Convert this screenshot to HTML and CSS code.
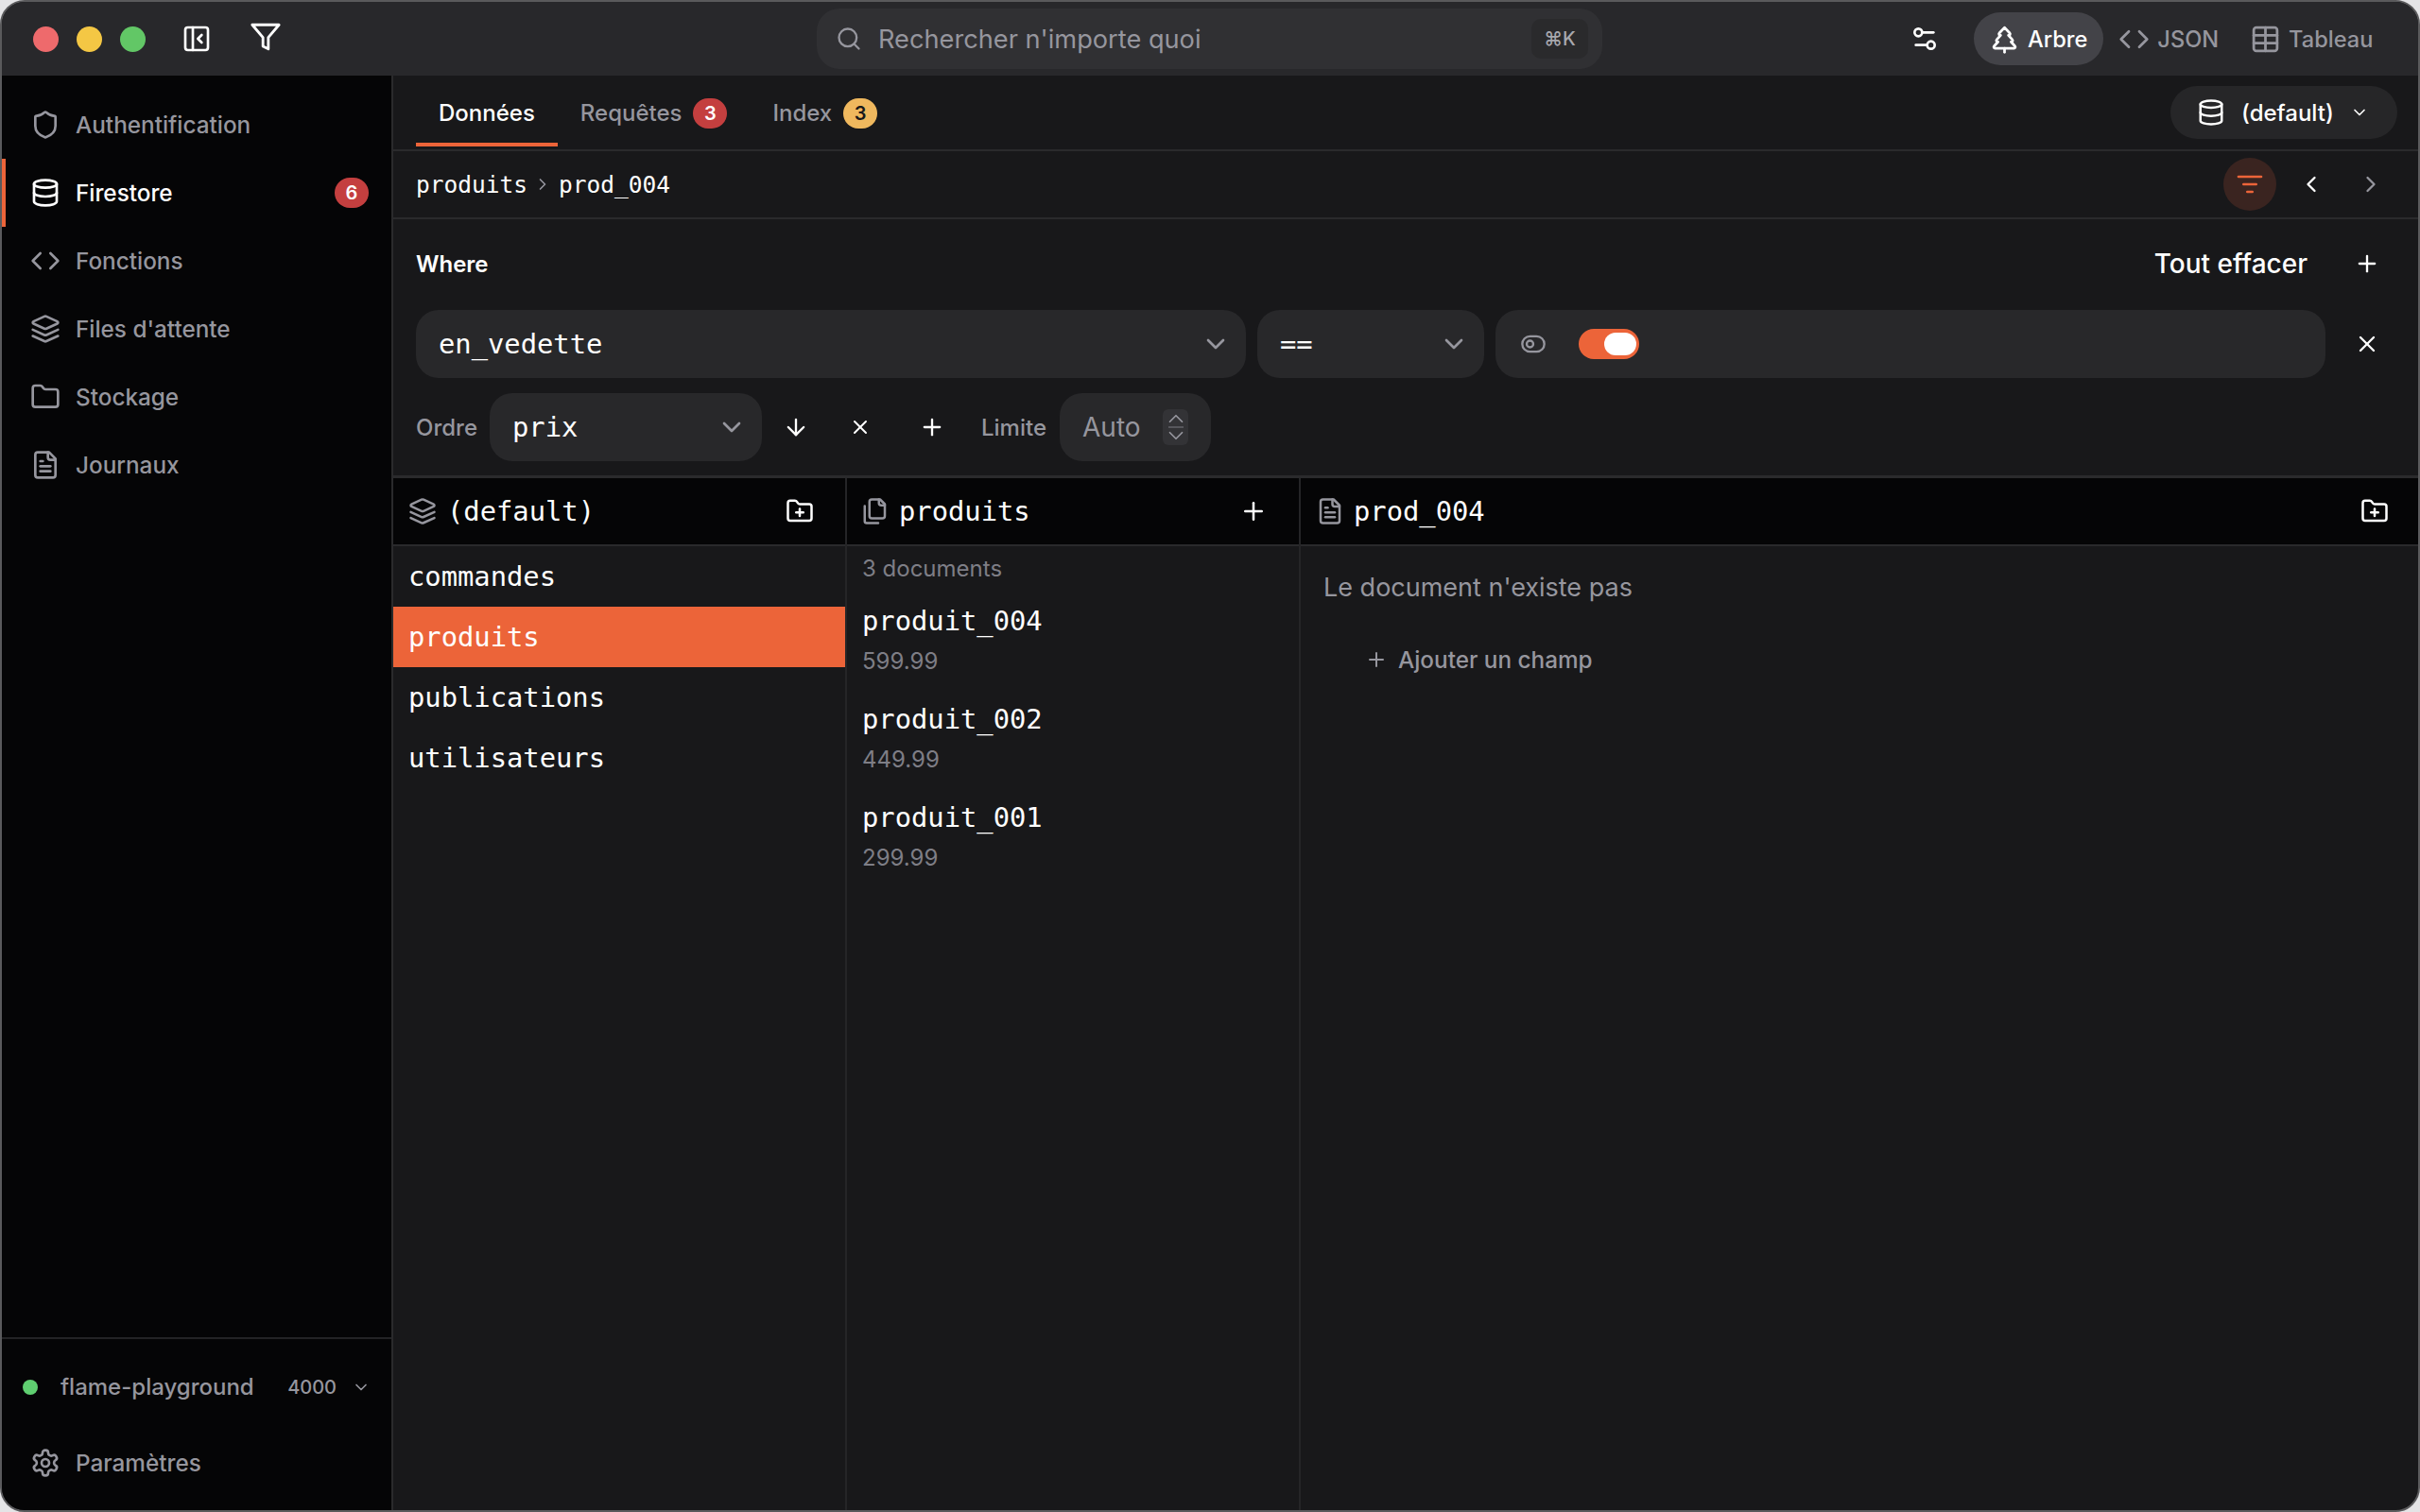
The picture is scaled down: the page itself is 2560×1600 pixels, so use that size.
FILE: index.html
```html
<!DOCTYPE html>
<html>

<head>
  <meta http-equiv="Content-Type" content="text/html; charset=utf-8" />
  <title>flame-playground</title>
  <link rel="stylesheet" href="styles.css">
</head>

<body>
  <svg class="sprites" xmlns="http://www.w3.org/2000/svg">
    <symbol id="i-shield" viewBox="0 0 24 24"><path d="M20 13c0 5-3.5 7.5-7.66 8.95a1 1 0 0 1-.67-.01C7.5 20.5 4 18 4 13V6a1 1 0 0 1 1-1c2 0 4.5-1.2 6.24-2.72a1.17 1.17 0 0 1 1.52 0C14.51 3.81 17 5 19 5a1 1 0 0 1 1 1z" /></symbol>
    <symbol id="i-db" viewBox="0 0 24 24"><ellipse cx="12" cy="5" rx="9" ry="3" /><path d="M3 5V19A9 3 0 0 0 21 19V5" /><path d="M3 12A9 3 0 0 0 21 12" /></symbol>
    <symbol id="i-code" viewBox="0 0 24 24"><path d="m16 18 6-6-6-6" /><path d="m8 6-6 6 6 6" /></symbol>
    <symbol id="i-layers" viewBox="0 0 24 24"><path d="m12.83 2.18a2 2 0 0 0-1.66 0L2.6 6.08a1 1 0 0 0 0 1.83l8.58 3.91a2 2 0 0 0 1.66 0l8.58-3.9a1 1 0 0 0 0-1.83Z" /><path d="m22 17.65-9.17 4.16a2 2 0 0 1-1.66 0L2 17.65" /><path d="m22 12.65-9.17 4.16a2 2 0 0 1-1.66 0L2 12.65" /></symbol>
    <symbol id="i-folder" viewBox="0 0 24 24"><path d="M20 20a2 2 0 0 0 2-2V8a2 2 0 0 0-2-2h-7.9a2 2 0 0 1-1.69-.9L9.6 3.9A2 2 0 0 0 7.93 3H4a2 2 0 0 0-2 2v13a2 2 0 0 0 2 2Z" /></symbol>
    <symbol id="i-folder-plus" viewBox="0 0 24 24"><path d="M20 20a2 2 0 0 0 2-2V8a2 2 0 0 0-2-2h-7.9a2 2 0 0 1-1.69-.9L9.6 3.9A2 2 0 0 0 7.93 3H4a2 2 0 0 0-2 2v13a2 2 0 0 0 2 2Z" /><path d="M12 10v6" /><path d="M9 13h6" /></symbol>
    <symbol id="i-file" viewBox="0 0 24 24"><path d="M15 2H6a2 2 0 0 0-2 2v16a2 2 0 0 0 2 2h12a2 2 0 0 0 2-2V7Z" /><path d="M14 2v4a2 2 0 0 0 2 2h4" /><path d="M10 9H8" /><path d="M16 13H8" /><path d="M16 17H8" /></symbol>
    <symbol id="i-files" viewBox="0 0 24 24"><path d="M20 7h-3a2 2 0 0 1-2-2V2" /><path d="M9 18a2 2 0 0 1-2-2V4a2 2 0 0 1 2-2h7l4 4v10a2 2 0 0 1-2 2Z" /><path d="M3 7.6v12.8A1.6 1.6 0 0 0 4.6 22h9.8" /></symbol>
    <symbol id="i-cog" viewBox="0 0 24 24"><path d="M12.22 2h-.44a2 2 0 0 0-2 2v.18a2 2 0 0 1-1 1.73l-.43.25a2 2 0 0 1-2 0l-.15-.08a2 2 0 0 0-2.73.73l-.22.38a2 2 0 0 0 .73 2.73l.15.1a2 2 0 0 1 1 1.72v.51a2 2 0 0 1-1 1.74l-.15.09a2 2 0 0 0-.73 2.73l.22.38a2 2 0 0 0 2.73.73l.15-.08a2 2 0 0 1 2 0l.43.25a2 2 0 0 1 1 1.73V20a2 2 0 0 0 2 2h.44a2 2 0 0 0 2-2v-.18a2 2 0 0 1 1-1.73l.43-.25a2 2 0 0 1 2 0l.15.08a2 2 0 0 0 2.73-.73l.22-.39a2 2 0 0 0-.73-2.73l-.15-.08a2 2 0 0 1-1-1.74v-.5a2 2 0 0 1 1-1.74l.15-.09a2 2 0 0 0 .73-2.73l-.22-.38a2 2 0 0 0-2.73-.73l-.15.08a2 2 0 0 1-2 0l-.43-.25a2 2 0 0 1-1-1.73V4a2 2 0 0 0-2-2z" /><circle cx="12" cy="12" r="3" /></symbol>
    <symbol id="i-panel" viewBox="0 0 24 24"><rect x="3" y="3" width="18" height="18" rx="2" /><path d="M9 3v18" /><path d="m16 15-3-3 3-3" /></symbol>
    <symbol id="i-funnel" viewBox="0 0 24 24"><path d="M22 3H2l8 9.46V19l4 2v-8.54z" /></symbol>
    <symbol id="i-search" viewBox="0 0 24 24"><circle cx="11" cy="11" r="8" /><path d="m21 21-4.3-4.3" /></symbol>
    <symbol id="i-sliders" viewBox="0 0 24 24"><path d="M14 17H5" /><path d="M19 7h-9" /><circle cx="17" cy="17" r="3" /><circle cx="7" cy="7" r="3" /></symbol>
    <symbol id="i-tree" viewBox="0 0 24 24"><path d="m17 14 3 3.3a1 1 0 0 1-.7 1.7H4.7a1 1 0 0 1-.7-1.7L7 14h-.3a1 1 0 0 1-.7-1.7L9 9h-.2A1 1 0 0 1 8 7.3L12 3l4 4.3a1 1 0 0 1-.8 1.7H15l3 3.3a1 1 0 0 1-.7 1.7H17Z" /><path d="M12 22v-3" /></symbol>
    <symbol id="i-table" viewBox="0 0 24 24"><rect x="3" y="3" width="18" height="18" rx="2" /><path d="M12 3v18" /><path d="M3 9h18" /><path d="M3 15h18" /></symbol>
    <symbol id="i-down" viewBox="0 0 24 24"><path d="m6 9 6 6 6-6" /></symbol>
    <symbol id="i-left" viewBox="0 0 24 24"><path d="m15 18-6-6 6-6" /></symbol>
    <symbol id="i-right" viewBox="0 0 24 24"><path d="m9 18 6-6-6-6" /></symbol>
    <symbol id="i-plus" viewBox="0 0 24 24"><path d="M5 12h14" /><path d="M12 5v14" /></symbol>
    <symbol id="i-x" viewBox="0 0 24 24"><path d="M18 6 6 18" /><path d="m6 6 12 12" /></symbol>
    <symbol id="i-arrow" viewBox="0 0 24 24"><path d="M12 5v14" /><path d="m19 12-7 7-7-7" /></symbol>
    <symbol id="i-lines" viewBox="0 0 24 24"><path d="M3 6h18" /><path d="M7 12h10" /><path d="M10 18h4" /></symbol>
    <symbol id="i-toggle" viewBox="0 0 24 24"><circle cx="9" cy="12" r="3" /><rect x="2" y="5" width="20" height="14" rx="7" /></symbol>
  </svg>

  <div class="window">
    <header class="titlebar">
      <div class="titlebar-left">
        <span class="light light-red"></span>
        <span class="light light-yellow"></span>
        <span class="light light-green"></span>
        <svg class="icon icon-bar panel-btn"><use href="#i-panel" /></svg>
        <svg class="icon icon-bar funnel-btn"><use href="#i-funnel" /></svg>
      </div>
      <div class="search">
        <svg class="icon search-icon"><use href="#i-search" /></svg>
        <span class="search-text">Rechercher n'importe quoi</span>
        <span class="kbd">⌘K</span>
      </div>
      <div class="titlebar-right">
        <svg class="icon sliders-btn"><use href="#i-sliders" /></svg>
        <div class="view view-active">
          <svg class="icon view-icon"><use href="#i-tree" /></svg>
          <span>Arbre</span>
        </div>
        <div class="view">
          <svg class="icon view-icon"><use href="#i-code" /></svg>
          <span>JSON</span>
        </div>
        <div class="view">
          <svg class="icon view-icon"><use href="#i-table" /></svg>
          <span>Tableau</span>
        </div>
      </div>
    </header>

    <div class="app">
      <aside class="sidebar">
        <nav class="nav">
          <a class="nav-item"><svg class="icon"><use href="#i-shield" /></svg>Authentification</a>
          <a class="nav-item active"><svg class="icon"><use href="#i-db" /></svg>Firestore<span class="badge badge-red nav-badge">6</span></a>
          <a class="nav-item"><svg class="icon"><use href="#i-code" /></svg>Fonctions</a>
          <a class="nav-item"><svg class="icon"><use href="#i-layers" /></svg>Files d'attente</a>
          <a class="nav-item"><svg class="icon"><use href="#i-folder" /></svg>Stockage</a>
          <a class="nav-item"><svg class="icon"><use href="#i-file" /></svg>Journaux</a>
        </nav>
        <div class="sidebar-foot">
          <div class="project">
            <span class="dot"></span>
            <span class="project-name">flame-playground</span>
            <span class="project-port">4000</span>
            <svg class="icon icon-sm"><use href="#i-down" /></svg>
          </div>
          <a class="nav-item"><svg class="icon"><use href="#i-cog" /></svg>Paramètres</a>
        </div>
      </aside>

      <main class="main">
        <div class="tabs">
          <div class="tab active">Données</div>
          <div class="tab">Requêtes<span class="badge badge-red">3</span></div>
          <div class="tab">Index<span class="badge badge-yellow">3</span></div>
          <div class="db-pill">
            <svg class="icon db-icon"><use href="#i-db" /></svg>
            <span>(default)</span>
            <svg class="icon icon-sm"><use href="#i-down" /></svg>
          </div>
        </div>

        <div class="crumbs">
          <span class="mono-sm">produits</span>
          <svg class="icon crumb-sep"><use href="#i-right" /></svg>
          <span class="mono-sm">prod_004</span>
          <span class="filter-btn"><svg class="icon"><use href="#i-lines" /></svg></span>
          <svg class="icon nav-arrow prev"><use href="#i-left" /></svg>
          <svg class="icon nav-arrow next"><use href="#i-right" /></svg>
        </div>

        <section class="query">
          <div class="query-head">
            <span class="where">Where</span>
            <span class="clear">Tout effacer</span>
            <svg class="icon act plus-top"><use href="#i-plus" /></svg>
          </div>
          <div class="where-row">
            <div class="field field-name"><span class="mono">en_vedette</span><svg class="icon chev"><use href="#i-down" /></svg></div>
            <div class="field field-op"><span class="mono">==</span><svg class="icon chev"><use href="#i-down" /></svg></div>
            <div class="field field-value">
              <svg class="icon toggle-icon"><use href="#i-toggle" /></svg>
              <span class="switch"><span class="knob"></span></span>
            </div>
            <svg class="icon act close-top"><use href="#i-x" /></svg>
          </div>
          <div class="order-row">
            <span class="lbl">Ordre</span>
            <div class="field field-order"><span class="mono">prix</span><svg class="icon chev"><use href="#i-down" /></svg></div>
            <svg class="icon act order-arrow"><use href="#i-arrow" /></svg>
            <svg class="icon act order-x"><use href="#i-x" /></svg>
            <svg class="icon act order-plus"><use href="#i-plus" /></svg>
            <span class="lbl lbl-limit">Limite</span>
            <div class="field field-limit">
              <span class="limit-val">Auto</span>
              <span class="stepper">
                <svg class="icon step-icon"><use href="#i-down" /></svg>
                <span class="step-line"></span>
                <svg class="icon step-icon step-down"><use href="#i-down" /></svg>
              </span>
            </div>
          </div>
        </section>

        <div class="columns">
          <div class="col col-db">
            <div class="col-head">
              <svg class="icon head-icon"><use href="#i-layers" /></svg>
              <span class="mono">(default)</span>
              <svg class="icon head-act"><use href="#i-folder-plus" /></svg>
            </div>
            <ul class="list">
              <li class="mono">commandes</li>
              <li class="mono selected">produits</li>
              <li class="mono">publications</li>
              <li class="mono">utilisateurs</li>
            </ul>
          </div>
          <div class="col col-docs">
            <div class="col-head">
              <svg class="icon head-icon"><use href="#i-files" /></svg>
              <span class="mono">produits</span>
              <svg class="icon head-act"><use href="#i-plus" /></svg>
            </div>
            <div class="doc-count">3 documents</div>
            <div class="doc"><span class="mono">produit_004</span><span class="doc-val">599.99</span></div>
            <div class="doc"><span class="mono">produit_002</span><span class="doc-val">449.99</span></div>
            <div class="doc"><span class="mono">produit_001</span><span class="doc-val">299.99</span></div>
          </div>
          <div class="col col-fields">
            <div class="col-head">
              <svg class="icon head-icon"><use href="#i-file" /></svg>
              <span class="mono">prod_004</span>
              <svg class="icon head-act"><use href="#i-folder-plus" /></svg>
            </div>
            <p class="empty">Le document n'existe pas</p>
            <div class="add-field"><svg class="icon"><use href="#i-plus" /></svg>Ajouter un champ</div>
          </div>
        </div>
      </main>
    </div>
  </div>
</body>

</html>
```

FILE: styles.css
```css
* {
  box-sizing: border-box;
}

html,
body {
  margin: 0;
  height: 100%;
}

body {
  background: #e4e4e6;
  color: #fff;
  font-family: Inter, "Liberation Sans", sans-serif;
  font-size: 24px;
  font-weight: 500;
}

.sprites {
  display: none;
}

.icon {
  width: 32px;
  height: 32px;
  flex: none;
  fill: none;
  stroke: currentColor;
  stroke-width: 2;
  stroke-linecap: round;
  stroke-linejoin: round;
}

.icon-sm {
  width: 20px;
  height: 20px;
}

.mono {
  font-family: "DejaVu Sans Mono", "Liberation Mono", monospace;
  font-size: 28.8px;
  font-weight: 400;
}

.mono-sm {
  font-family: "DejaVu Sans Mono", "Liberation Mono", monospace;
  font-size: 24.5px;
  font-weight: 400;
}

.window {
  width: 2560px;
  height: 1600px;
  display: flex;
  flex-direction: column;
  background: #18181a;
  border: 2px solid #5a5a5c;
  border-radius: 26px;
  overflow: hidden;
}

/* title bar */
.titlebar {
  height: 78px;
  flex: none;
  display: grid;
  grid-template-columns: 862px 831px 1fr;
  align-items: center;
  background: #28282b;
}

.titlebar-left {
  display: flex;
  align-items: center;
  gap: 19px;
  padding-left: 33px;
}

.light {
  width: 27px;
  height: 27px;
  border-radius: 50%;
}

.light-red {
  background: #ee6a6c;
}

.light-yellow {
  background: #f4c744;
}

.light-green {
  background: #62c766;
}

.panel-btn {
  margin-left: 19px;
}

.funnel-btn {
  margin-left: 21px;
  margin-top: -4px;
  width: 34px;
  height: 34px;
}

.search {
  height: 64px;
  display: flex;
  align-items: center;
  padding: 0 15px 0 20px;
  background: #303033;
  border-radius: 24px;
  color: #96969e;
}

.search-icon {
  width: 28px;
  height: 28px;
  margin-right: 17px;
}

.search-text {
  font-size: 27.2px;
  font-weight: 400;
}

.kbd {
  margin-left: auto;
  width: 60px;
  height: 42px;
  line-height: 42px;
  text-align: center;
  font-size: 20px;
  background: #2a2a2c;
  border-radius: 10px;
  color: #a8a8ae;
}

.titlebar-right {
  display: flex;
  align-items: center;
  padding-left: 325px;
}

.sliders-btn {
  margin-right: 36px;
}

.view {
  height: 56px;
  display: flex;
  align-items: center;
  gap: 8px;
  padding: 0 17px 0 16px;
  border-radius: 28px;
  color: #96969e;
  font-size: 23.6px;
}

.view-icon {
  width: 33px;
  height: 33px;
}

.view-active {
  background: #434348;
  color: #fff;
}

/* layout */
.app {
  flex: 1;
  min-height: 0;
  display: flex;
}

.sidebar {
  width: 414px;
  flex: none;
  display: flex;
  flex-direction: column;
  background: #050506;
  border-right: 2px solid #2a2a2c;
}

.nav {
  padding-top: 16px;
  flex: 1;
}

.nav-item {
  height: 72px;
  display: flex;
  align-items: center;
  gap: 16px;
  padding-left: 30px;
  color: #96969e;
  font-size: 24.3px;
}

.nav-item.active {
  color: #fff;
  border-left: 4px solid #ec6439;
  padding-left: 26px;
}

.nav-badge {
  margin-left: auto;
  margin-right: 24px;
}

.badge {
  min-width: 36px;
  height: 32px;
  line-height: 32px;
  border-radius: 16px;
  text-align: center;
  font-size: 20px;
  font-weight: 600;
}

.badge-red {
  background: #c43f3f;
  color: #fff;
}

.badge-yellow {
  background: #efb85e;
  color: #18181a;
}

.sidebar-foot {
  border-top: 2px solid #232325;
  padding-bottom: 14px;
}

.project {
  height: 95px;
  display: flex;
  align-items: center;
  padding: 6px 22px 0 22px;
  color: #96969e;
}

.dot {
  width: 16px;
  height: 16px;
  border-radius: 50%;
  background: #5fcf70;
  margin-right: 24px;
}

.project-name {
  font-size: 24px;
}

.project-port {
  margin-left: auto;
  margin-right: 16px;
  font-size: 20px;
}

/* main */
.main {
  flex: 1;
  min-width: 0;
  display: flex;
  flex-direction: column;
}

.tabs {
  height: 80px;
  flex: none;
  display: flex;
  padding-left: 24px;
  border-bottom: 2px solid #2a2a2c;
}

.tab {
  height: 75px;
  display: flex;
  align-items: center;
  gap: 12px;
  padding: 8px 24px 0 24px;
  color: #96969e;
  border-bottom: 4px solid transparent;
}

.tab.active {
  color: #fff;
  border-bottom-color: #ec6439;
}

.db-pill {
  margin: 11px 22px 0 auto;
  width: 240px;
  height: 56px;
  display: flex;
  align-items: center;
  gap: 17px;
  padding-left: 28px;
  background: #262628;
  border-radius: 28px;
}

.db-icon {
  width: 30px;
  height: 30px;
}

.crumbs {
  height: 72px;
  flex: none;
  display: flex;
  align-items: center;
  padding-left: 24px;
  border-bottom: 2px solid #2a2a2c;
}

.crumb-sep {
  width: 20px;
  height: 20px;
  margin: 0 7px 0 6px;
  color: #96969e;
}

.filter-btn {
  margin-left: auto;
  width: 56px;
  height: 56px;
  display: flex;
  align-items: center;
  justify-content: center;
  background: #3a2420;
  border-radius: 50%;
  color: #ec6439;
}

.nav-arrow {
  width: 28px;
  height: 28px;
}

.prev {
  margin-left: 23px;
}

.next {
  margin-left: 35px;
  margin-right: 36px;
  color: #96969e;
}

/* query builder */
.query {
  height: 274px;
  flex: none;
  padding: 22px 40px 0 24px;
  border-bottom: 3px solid #2a2a2c;
}

.query-head {
  height: 50px;
  display: flex;
  align-items: center;
}

.where {
  font-weight: 600;
}

.clear {
  margin-left: auto;
  margin-right: 49px;
  font-size: 28px;
}

.act {
  width: 28px;
  height: 28px;
}

.where-row {
  margin-top: 24px;
  display: flex;
  align-items: center;
  gap: 12px;
}

.field {
  height: 72px;
  flex: none;
  display: flex;
  align-items: center;
  background: #28282a;
  border-radius: 24px;
  padding: 0 16px 0 24px;
}

.chev {
  margin-left: auto;
  color: #96969e;
}

.field-name {
  width: 878px;
}

.field-op {
  width: 240px;
}

.field-value {
  width: 878px;
  padding-left: 26px;
}

.close-top {
  margin-left: 18px;
}

.toggle-icon {
  width: 28px;
  height: 28px;
  color: #96969e;
}

.switch {
  margin-left: 34px;
  width: 64px;
  height: 32px;
  display: flex;
  align-items: center;
  justify-content: flex-end;
  padding-right: 3px;
  background: #ec6439;
  border-radius: 16px;
}

.knob {
  width: 34px;
  height: 24px;
  background: #fff;
  border-radius: 12px;
}

.order-row {
  margin-top: 16px;
  display: flex;
  align-items: center;
}

.lbl {
  color: #96969e;
}

.field-order {
  margin-left: 13px;
  width: 288px;
}

.order-arrow {
  margin-left: 22px;
}

.order-x {
  margin-left: 42px;
  width: 24px;
  height: 24px;
}

.order-plus {
  margin-left: 50px;
}

.lbl-limit {
  margin-left: 38px;
}

.field-limit {
  margin-left: 14px;
  width: 160px;
  padding: 0 24px;
  color: #96969e;
}

.limit-val {
  font-size: 28px;
  font-weight: 400;
}

.stepper {
  margin-left: auto;
  width: 27px;
  height: 38px;
  display: flex;
  flex-direction: column;
  align-items: center;
  justify-content: center;
  background: #333336;
  border-radius: 6px;
}

.step-icon {
  width: 26px;
  height: 26px;
  margin: -5px 0;
  stroke-width: 1.6;
  transform: scaleY(-1);
}

.step-down {
  transform: none;
}

.step-line {
  width: 16px;
  height: 2px;
  flex: none;
  background: #57575c;
}

/* columns */
.columns {
  flex: 1;
  min-height: 0;
  display: flex;
}

.col {
  border-right: 2px solid #252527;
}

.col-db {
  width: 480px;
}

.col-docs {
  width: 480px;
}

.col-fields {
  flex: 1;
  border-right: 0;
}

.col-head {
  height: 72px;
  display: flex;
  align-items: center;
  padding: 0 33px 0 16px;
  background: #050506;
  border-bottom: 2px solid #2a2a2c;
}

.col-docs .col-head {
  padding-left: 15px;
}

.col-fields .col-head {
  padding-right: 31px;
}

.head-icon {
  width: 30px;
  height: 30px;
  margin-right: 10px;
  color: #96969e;
}

.col-db .head-icon {
  margin-right: 11px;
}

.head-act {
  margin-left: auto;
  width: 30px;
  height: 30px;
}

.list {
  list-style: none;
  margin: 0;
  padding: 0;
}

.list li {
  height: 64px;
  line-height: 64px;
  padding-left: 16px;
}

.list .selected {
  background: #ec6439;
}

.doc-count {
  padding: 10px 0 0 16px;
  height: 46px;
  color: #7e7e86;
  font-weight: 400;
  line-height: 28px;
}

.doc {
  height: 104px;
  padding: 15px 0 0 16px;
  display: flex;
  flex-direction: column;
  gap: 10px;
}

.doc-val {
  font-weight: 400;
  color: #7e7e86;
}

.col-docs .doc .mono {
  line-height: 36px;
}

.empty {
  margin: 24px 0 0 24px;
  color: #96969e;
  font-size: 27px;
  font-weight: 400;
  line-height: 40px;
}

.add-field {
  margin: 41px 0 0 68px;
  display: flex;
  align-items: center;
  gap: 11px;
  color: #96969e;
  font-size: 24.3px;
}

.add-field .icon {
  width: 24px;
  height: 24px;
}
```
